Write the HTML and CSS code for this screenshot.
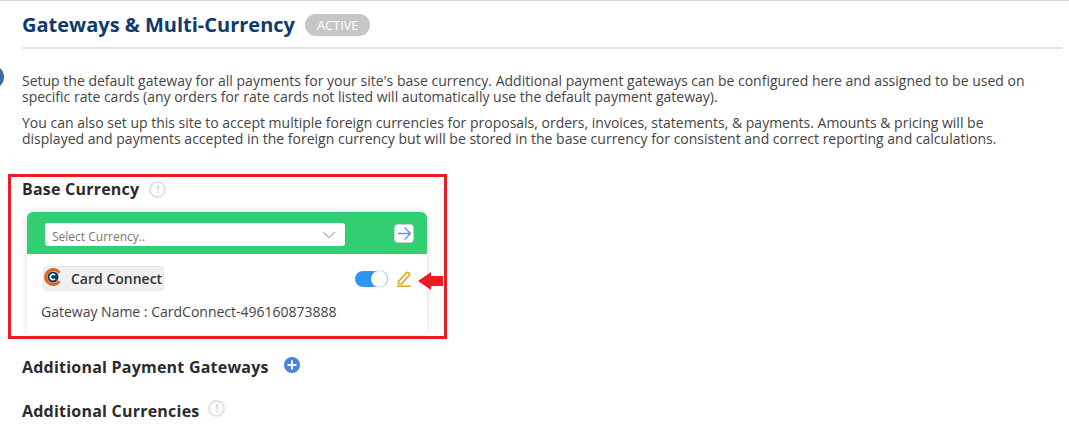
FILE: index.html
```html
<!DOCTYPE html>
<html lang="en">
  <head>
    <meta charset="UTF-8" />
    <title>Gateways &amp; Multi-Currency</title>
    <link rel="stylesheet" href="styles.css">
  </head>
  <body>
    <div class="side-dot"></div>
    <div class="page">
      <div class="page-head">
        <h1>Gateways &amp; Multi-Currency</h1>
        <span class="status">ACTIVE</span>
      </div>

      <div class="intro">
        <p>Setup the default gateway for all payments for your site's base currency. Additional payment gateways can be configured here and assigned to be used on specific rate cards (any orders for rate cards not listed will automatically use the default payment gateway).</p>
        <p>You can also set up this site to accept multiple foreign currencies for proposals, orders, invoices, statements, &amp; payments. Amounts &amp; pricing will be displayed and payments accepted in the foreign currency but will be stored in the base currency for consistent and correct reporting and calculations.</p>
      </div>

      <div class="section-title base-title">
        <h2>Base Currency</h2>
        <span class="info">!</span>
      </div>

      <div class="gateway-card">
        <div class="card-top">
          <div class="currency-select">
            <span>Select Currency..</span>
            <svg width="14" height="8" viewBox="0 0 14 8"><path d="M1 1l6 5.5L13 1" fill="none" stroke="#bdbdbd" stroke-width="1.6"/></svg>
          </div>
          <div class="go-btn">
            <svg width="13" height="13" viewBox="0 0 13 13"><path d="M0 6.500h12M6.500 .5l6 6-6 6" fill="none" stroke="#5b93dc" stroke-width="1.4"/></svg>
          </div>
        </div>
        <div class="card-body">
          <div class="gateway-row">
            <div class="gateway-logo">
              <svg width="18" height="18" viewBox="0 0 18 18">
                <path d="M15.400 4.800a7.500 7.500 0 1 0 0 8.400" fill="none" stroke="#e2621f" stroke-width="3"/>
                <circle cx="9" cy="9" r="5.500" fill="#123a5c"/>
                <path d="M11 7.200a2.700 2.700 0 1 0 0 3.600" fill="none" stroke="#fff" stroke-width="1.600"/>
              </svg>
              <span>Card Connect</span>
            </div>
            <div class="row-actions">
              <div class="toggle"><div class="knob"></div></div>
              <svg class="edit" width="14" height="16" viewBox="0 0 14 16">
                <path d="M1.500 10.500L9.500 1.700a1.400 1.400 0 0 1 2 0l.7.700a1.400 1.400 0 0 1 0 2L4.300 13H1.500z" fill="none" stroke="#e5a823" stroke-width="1.700"/>
                <path d="M0 15.200h14" stroke="#e5a823" stroke-width="1.600"/>
              </svg>
            </div>
          </div>
          <p class="gateway-name">Gateway Name : CardConnect-496160873888</p>
        </div>
      </div>

      <div class="section-title add-title">
        <h2>Additional Payment Gateways</h2>
        <span class="plus">
          <svg width="16" height="16" viewBox="0 0 16 16"><circle cx="8" cy="8" r="8" fill="#4a83db"/><path d="M8 3.500v9M3.500 8h9" stroke="#fff" stroke-width="2"/></svg>
        </span>
      </div>

      <div class="section-title cur-title">
        <h2>Additional Currencies</h2>
        <span class="info info-up">!</span>
      </div>
    </div>

    <!-- annotation drawn over the screenshot -->
    <div class="red-box"></div>
    <svg class="red-arrow" width="25" height="18" viewBox="0 0 25 18"><path d="M0 9L13 0v4h12v10H13v4z" fill="#ed1c24"/></svg>
  </body>
</html>
```

FILE: styles.css
```css
* {
  margin: 0;
  padding: 0;
  box-sizing: border-box;
}
body {
  background: #fff;
  color: #444;
  font-family: "Open Sans", sans-serif;
  border-top: 1px solid #d8d8d8;
  height: 441px;
  overflow: hidden;
  position: relative;
}
.side-dot {
  position: absolute;
  left: -20px;
  top: 64px;
  width: 24px;
  height: 24px;
  border-radius: 50%;
  background: #3a6ea5;
}
.page {
  padding: 0 7px 0 22px;
}
.page-head {
  display: flex;
  align-items: center;
  gap: 10px;
  height: 48px;
  padding-top: 1px;
  border-bottom: 2px solid #e2e2e2;
}
h1 {
  font-size: 20px;
  font-weight: 700;
  color: #0f3b6c;
}
.status {
  margin-top: 1px;
  background: #c6c6c6;
  color: #fff;
  font-size: 12.800px;
  line-height: 22px;
  padding: 0 12px;
  border-radius: 11px;
}
.intro {
  max-width: 1020px;
  margin-top: 24px;
  font-size: 14px;
  line-height: 16px;
  color: #444;
}
.intro p {
  margin-bottom: 10px;
}
.section-title {
  display: flex;
  align-items: center;
  gap: 10px;
}
h2 {
  font-size: 16px;
  font-weight: 700;
  letter-spacing: 0.22px;
  color: #2b2b2b;
}
.base-title {
  margin-top: 31px;
}
.info {
  width: 17px;
  height: 17px;
  border: 2px solid #e2e2e2;
  border-radius: 50%;
  color: #d0d0d0;
  font-size: 10px;
  font-weight: 700;
  line-height: 13px;
  text-align: center;
}
.info-up {
  margin-top: -6px;
}
.gateway-card {
  width: 400px;
  margin: 12px 0 0 5px;
  border-radius: 6px;
  background: #fff;
  box-shadow: 0 0 8px rgba(0, 0, 0, 0.13);
}
.card-top {
  display: flex;
  align-items: center;
  justify-content: space-between;
  height: 42px;
  padding: 0 13px 0 18px;
  background: #31cf72;
  border-radius: 6px 6px 0 0;
}
.currency-select {
  display: flex;
  align-items: center;
  justify-content: space-between;
  width: 300px;
  height: 23px;
  margin-top: 3px;
  padding: 0 9px 0 7px;
  background: #fff;
  border-radius: 3px;
  font-size: 12px;
  color: #777;
}
.currency-select span {
  margin-top: 4px;
}
.go-btn {
  display: flex;
  align-items: center;
  justify-content: center;
  width: 20px;
  height: 19px;
  background: #fff;
  border: 1px solid #c9d6ce;
  border-radius: 4px;
}
.card-body {
  padding: 12px 16px 14px 14px;
}
.gateway-row {
  display: flex;
  align-items: center;
  justify-content: space-between;
}
.gateway-logo {
  display: flex;
  align-items: center;
  gap: 9px;
  height: 25px;
  padding: 0 1px 0 0;
  margin-left: 2px;
  background: #f1f1f1;
  border: 1px solid #e6e6e6;
  border-radius: 4px;
  font-size: 14px;
  font-weight: 600;
  color: #333;
}
.gateway-logo svg {
  margin-top: -4px;
}
.row-actions {
  display: flex;
  align-items: center;
  gap: 9px;
}
.toggle {
  width: 33px;
  height: 16px;
  background: linear-gradient(90deg, #2f96f0 50%, #a9d4f8 75%);
  border-radius: 8px;
  position: relative;
}
.knob {
  position: absolute;
  right: 1px;
  top: 0;
  width: 16px;
  height: 16px;
  background: #fff;
  border-radius: 50%;
  box-shadow: 0 0 3px rgba(0, 0, 0, 0.2);
}
.gateway-name {
  margin-top: 11px;
  font-size: 14px;
  color: #444;
}
.add-title {
  margin-top: 21px;
  gap: 15px;
}
.add-title .plus {
  display: flex;
  margin-top: -4px;
}
.cur-title {
  margin-top: 22px;
  gap: 9px;
}
.red-box {
  position: absolute;
  left: 8px;
  top: 173px;
  width: 439px;
  height: 165px;
  border: 3px solid #ed1c24;
}
.red-arrow {
  position: absolute;
  left: 418px;
  top: 271px;
}
```
